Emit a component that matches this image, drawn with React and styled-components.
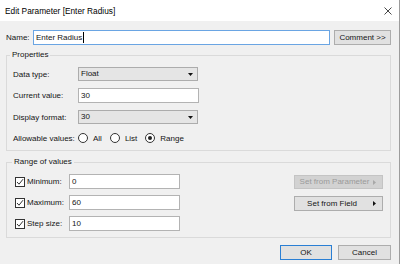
import React from "react";
import styled, { createGlobalStyle } from "styled-components";

const Global = createGlobalStyle`
  html, body { margin: 0; padding: 0; background: #f0f0f0; }
  body {
    font-family: "Liberation Sans", Arial, sans-serif;
    font-size: 8px;
    color: #141414;
  }
  * { box-sizing: border-box; }
`;

const Window = styled.div`
  width: 400px;
  height: 264px;
  background: #f0f0f0;
  border-right: 1px solid #9c9c9c;
  display: flex;
  flex-direction: column;
  overflow: hidden;
`;

const TitleBar = styled.div`
  height: 21px;
  background: #ffffff;
  display: flex;
  align-items: center;
  justify-content: space-between;
  padding: 0 7px 0 5px;
  font-size: 8.3px;
  color: #000;
`;

const Content = styled.div`
  display: flex;
  flex-direction: column;
  padding: 9px 8px 0 6px;
`;

const NameRow = styled.div`
  display: flex;
  align-items: center;
  height: 15px;
`;

const NameLabel = styled.span`
  width: 27px;
`;

const Field = styled.div`
  height: ${(p) => p.$h || 15}px;
  width: ${(p) => (p.$w ? `${p.$w}px` : "auto")};
  flex: ${(p) => (p.$w ? "none" : 1)};
  background: #fff;
  border: 1px solid ${(p) => (p.$focus ? "#6aa5e3" : "#b3b3b3")};
  display: flex;
  align-items: center;
  padding-left: 2px;
  line-height: 1;
`;

const Caret = styled.span`
  display: inline-block;
  width: 1px;
  height: 11px;
  background: #000;
  margin-left: 1px;
`;

const Button = styled.div`
  height: ${(p) => p.$h || 15}px;
  width: ${(p) => p.$w}px;
  background: ${(p) => (p.$disabled ? "#d2d2d2" : "#e1e1e1")};
  border: 1px solid
    ${(p) => (p.$default ? "#2a7fd4" : p.$disabled ? "#c4c4c4" : "#adadad")};
  color: ${(p) => (p.$disabled ? "#9a9a9a" : "#141414")};
  display: flex;
  align-items: center;
  justify-content: center;
  padding: ${(p) => (p.$menu ? "0 6px 0 4px" : "0")};
  line-height: 1;
  white-space: nowrap;
  margin-left: ${(p) => p.$ml || 0}px;
`;

const ButtonText = styled.span`
  flex: 1;
  text-align: center;
  white-space: nowrap;
  margin-right: ${(p) => p.$mr}px;
`;

const Group = styled.fieldset`
  margin: ${(p) => p.$mt}px 0 0 0;
  border: 1px solid #dadada;
  padding: 7px ${(p) => p.$pr}px ${(p) => p.$pb}px ${(p) => p.$pl}px;
  min-width: 0;
`;

const Legend = styled.legend`
  font-size: 8px;
  line-height: 10px;
  padding: 0 2px;
  margin-left: -3px;
`;

const PropGrid = styled.div`
  display: grid;
  grid-template-columns: 65px auto;
  row-gap: 7px;
  align-items: center;
  justify-items: start;
`;

const Select = styled.div`
  height: 14px;
  width: 120px;
  background: #e5e5e5;
  border: 1px solid #acacac;
  display: flex;
  align-items: center;
  justify-content: space-between;
  padding: 0 4px 0 2px;
  line-height: 1;
`;

const RadioRow = styled.div`
  display: flex;
  align-items: center;
  height: 14px;
  gap: 8px;
`;

const RadioOption = styled.span`
  display: flex;
  align-items: center;
  gap: 5px;
`;

const RadioCircle = styled.span`
  width: 10px;
  height: 10px;
  border-radius: 50%;
  border: 1px solid #333;
  background: #fff;
  display: flex;
  align-items: center;
  justify-content: center;
  &::after {
    content: "";
    width: 4px;
    height: 4px;
    border-radius: 50%;
    background: ${(p) => (p.$checked ? "#222" : "transparent")};
  }
`;

const RangeBody = styled.div`
  display: flex;
  justify-content: space-between;
  align-items: flex-start;
`;

const RangeGrid = styled.div`
  display: grid;
  grid-template-columns: 54px 111px;
  row-gap: 6px;
  align-items: center;
`;

const CheckLabel = styled.span`
  display: flex;
  align-items: center;
  gap: 2px;
`;

const CheckBox = styled.span`
  width: 10px;
  height: 10px;
  border: 1px solid #333;
  background: #fff;
  display: flex;
  align-items: center;
  justify-content: center;
`;

const ButtonColumn = styled.div`
  display: flex;
  flex-direction: column;
  gap: 7px;
  margin-top: 1px;
`;

const Footer = styled.div`
  display: flex;
  justify-content: flex-end;
  margin-top: 7px;
`;

const DownArrow = () => (
  <svg width="5" height="3" viewBox="0 0 5 3">
    <polygon points="0,0 5,0 2.5,3" fill="#111" />
  </svg>
);

const RightArrow = ({ color }) => (
  <svg width="3" height="5" viewBox="0 0 3 5">
    <polygon points="0,0 3,2.5 0,5" fill={color} />
  </svg>
);

const Check = () => (
  <svg width="8" height="8" viewBox="0 0 8 8">
    <path d="M1 4 L3 6.2 L7 1.2" fill="none" stroke="#333" strokeWidth="1" />
  </svg>
);

const CloseIcon = () => (
  <svg width="8" height="8" viewBox="0 0 8 8">
    <path d="M0.5 0.5 L7.5 7.5 M7.5 0.5 L0.5 7.5" stroke="#333" strokeWidth="0.9" />
  </svg>
);

const RangeRow = ({ label, value }) => (
  <>
    <CheckLabel>
      <CheckBox>
        <Check />
      </CheckBox>
      {label}
    </CheckLabel>
    <Field $w={111}>{value}</Field>
  </>
);

export default function App() {
  return (
    <>
      <Global />
      <Window>
        <TitleBar>
          <span>Edit Parameter [Enter Radius]</span>
          <CloseIcon />
        </TitleBar>
        <Content>
          <NameRow>
            <NameLabel>Name:</NameLabel>
            <Field $focus>
              Enter Radius
              <Caret />
            </Field>
            <Button $w={57} $ml={4}>
              Comment &gt;&gt;
            </Button>
          </NameRow>

          <Group $mt={5} $pl={6} $pr={6} $pb={5}>
            <Legend>Properties</Legend>
            <PropGrid>
              <span>Data type:</span>
              <Select>
                <span>Float</span>
                <DownArrow />
              </Select>
              <span>Current value:</span>
              <Field $w={121}>30</Field>
              <span>Display format:</span>
              <Select>
                <span>30</span>
                <DownArrow />
              </Select>
              <span>Allowable values:</span>
              <RadioRow>
                <RadioOption>
                  <RadioCircle />
                  All
                </RadioOption>
                <RadioOption>
                  <RadioCircle />
                  List
                </RadioOption>
                <RadioOption>
                  <RadioCircle $checked />
                  Range
                </RadioOption>
              </RadioRow>
            </PropGrid>
          </Group>

          <Group $mt={6} $pl={8} $pr={7} $pb={6}>
            <Legend>Range of values</Legend>
            <RangeBody>
              <RangeGrid>
                <RangeRow label="Minimum:" value="0" />
                <RangeRow label="Maximum:" value="60" />
                <RangeRow label="Step size:" value="10" />
              </RangeGrid>
              <ButtonColumn>
                <Button $w={89} $h={14} $menu $disabled>
                  <ButtonText $mr={3}>Set from Parameter</ButtonText>
                  <RightArrow color="#a8a8a8" />
                </Button>
                <Button $w={89} $h={15} $menu>
                  <ButtonText $mr={8}>Set from Field</ButtonText>
                  <RightArrow color="#111" />
                </Button>
              </ButtonColumn>
            </RangeBody>
          </Group>

          <Footer>
            <Button $w={52} $default>
              OK
            </Button>
            <Button $w={53} $ml={6}>
              Cancel
            </Button>
          </Footer>
        </Content>
      </Window>
    </>
  );
}
